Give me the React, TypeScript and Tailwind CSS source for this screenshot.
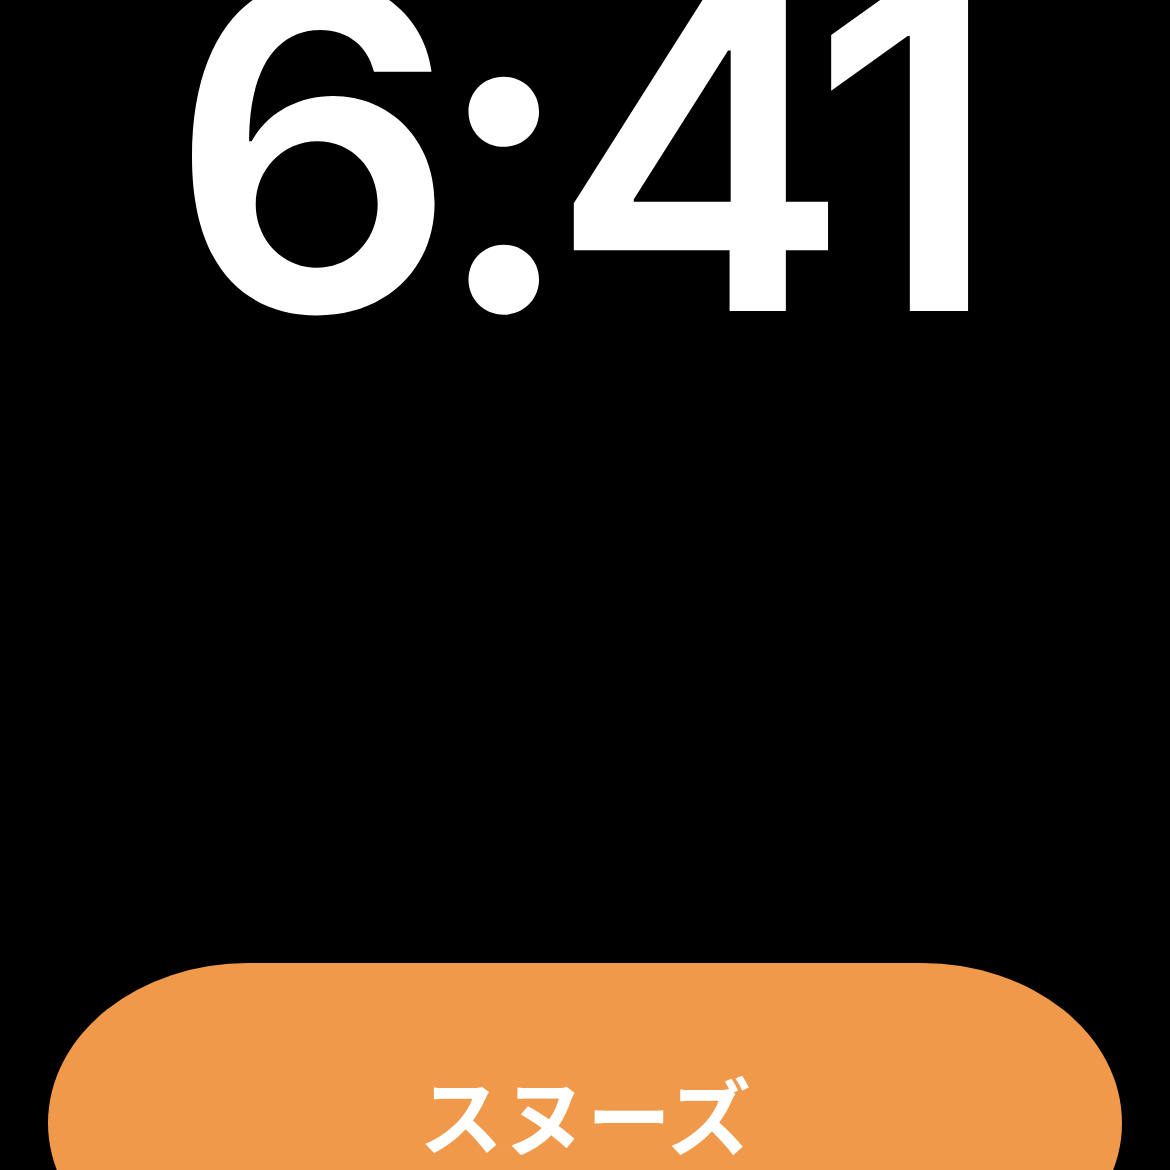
export default function App() {
  return (
    <div className="w-[1170px] h-[1170px] bg-black overflow-hidden flex flex-col items-center">
      <div
        className="mt-[-77px] h-[450px] shrink-0 text-white text-[450px] leading-none font-semibold tracking-[-0.056em] pr-[25px]"
        style={{ fontFamily: 'Inter, "Noto Sans", sans-serif' }}
      >
        6:41
      </div>
      <div className="mt-[590px] w-[1074px] h-[320px] shrink-0 bg-[#F0994A] rounded-[200px_/_160px] flex justify-center pt-[108px]">
        <span
          className="text-white text-[84px] leading-none font-bold"
          style={{ fontFamily: '"Noto Sans CJK JP", "Noto Sans", sans-serif' }}
        >
          スヌーズ
        </span>
      </div>
    </div>
  );
}
